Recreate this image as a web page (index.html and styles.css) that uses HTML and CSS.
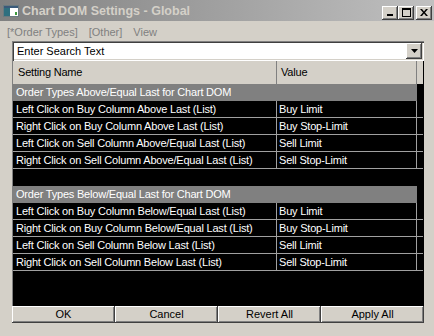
FILE: index.html
```html
<!DOCTYPE html>
<html lang="en">

<head>
    <meta charset="UTF-8" />
    <title>Chart DOM Settings - Global</title>
    <link rel="stylesheet" href="styles.css">
</head>

<body>
    <!-- Title bar -->
    <div class="titlebar">
        <svg class="app-icon" width="16" height="12" viewBox="0 0 16 12">
            <rect x="0.5" y="0.5" width="15" height="11" fill="#c0c0c0" stroke="#6a7a80" />
            <rect x="1" y="1" width="14" height="2" fill="#3a5a7a" />
            <rect x="1" y="3" width="6" height="8" fill="#2f6f7f" />
            <rect x="7" y="3" width="8" height="8" fill="#ffffff" />
            <rect x="12" y="7" width="2" height="3" fill="#3c9a3c" />
        </svg>
        <span class="title">Chart DOM Settings - Global</span>
        <div class="caption-buttons">
            <div class="cap-btn">
                <svg width="8" height="7" viewBox="0 0 8 7"><rect x="1" y="5" width="6" height="2" fill="#000" /></svg>
            </div>
            <div class="cap-btn">
                <svg width="9" height="9" viewBox="0 0 9 9"><rect x="0.5" y="0.5" width="8" height="8" fill="none" stroke="#000" /><rect x="0" y="0" width="9" height="2" fill="#000" /></svg>
            </div>
            <div class="cap-btn close">
                <svg width="8" height="7" viewBox="0 0 8 7"><path d="M0 0h2l2 2.5L6 0h2L5 3.5 8 7H6L4 4.5 2 7H0l3-3.5z" fill="#000" /></svg>
            </div>
        </div>
    </div>

    <!-- Menu -->
    <div class="menu">
        <span>[*Order Types]</span>
        <span>[Other]</span>
        <span>View</span>
    </div>

    <div class="content">
        <!-- Search box -->
        <div class="combo">
            <div class="combo-text">Enter Search Text</div>
            <div class="combo-btn">
                <svg width="7" height="4" viewBox="0 0 7 4"><path d="M0 0h7L3.5 4z" fill="#000" /></svg>
            </div>
        </div>

        <!-- Settings grid -->
        <div class="grid">
            <div class="grid-head">
                <div class="h-name">Setting Name</div>
                <div class="h-value">Value</div>
                <div class="h-fill"></div>
            </div>

            <div class="row cat">
                <div class="cat-cell">Order Types Above/Equal Last for Chart DOM</div>
                <div class="fill"></div>
            </div>
            <div class="row data">
                <div class="c-name">Left Click on Buy Column Above Last (List)</div>
                <div class="c-value">Buy Limit</div>
                <div class="fill"></div>
            </div>
            <div class="row data">
                <div class="c-name">Right Click on Buy Column Above Last (List)</div>
                <div class="c-value">Buy Stop-Limit</div>
                <div class="fill"></div>
            </div>
            <div class="row data">
                <div class="c-name">Left Click on Sell Column Above/Equal Last (List)</div>
                <div class="c-value">Sell Limit</div>
                <div class="fill"></div>
            </div>
            <div class="row data">
                <div class="c-name">Right Click on Sell Column Above/Equal Last (List)</div>
                <div class="c-value">Sell Stop-Limit</div>
                <div class="fill"></div>
            </div>

            <div class="row blank"></div>

            <div class="row cat">
                <div class="cat-cell">Order Types Below/Equal Last for Chart DOM</div>
                <div class="fill"></div>
            </div>
            <div class="row data">
                <div class="c-name">Left Click on Buy Column Below/Equal Last (List)</div>
                <div class="c-value">Buy Limit</div>
                <div class="fill"></div>
            </div>
            <div class="row data">
                <div class="c-name">Right Click on Buy Column Below/Equal Last (List)</div>
                <div class="c-value">Buy Stop-Limit</div>
                <div class="fill"></div>
            </div>
            <div class="row data">
                <div class="c-name">Left Click on Sell Column Below Last (List)</div>
                <div class="c-value">Sell Limit</div>
                <div class="fill"></div>
            </div>
            <div class="row data">
                <div class="c-name">Right Click on Sell Column Below Last (List)</div>
                <div class="c-value">Sell Stop-Limit</div>
                <div class="fill"></div>
            </div>
        </div>

        <!-- Buttons -->
        <div class="buttons">
            <div class="btn">OK</div>
            <div class="btn">Cancel</div>
            <div class="btn">Revert All</div>
            <div class="btn">Apply All</div>
        </div>
    </div>
</body>

</html>
```

FILE: styles.css
```css
* {
    box-sizing: border-box;
}

body {
    font-family: "Liberation Sans", Arial, sans-serif;
    font-size: 11px;
    margin: 0;
    width: 434px;
    height: 336px;
    overflow: hidden;
    background-color: #d4d0c8;
}

.titlebar {
    display: flex;
    align-items: center;
    height: 21px;
    padding-left: 3px;
    background: linear-gradient(to right, #808080, #c0c0c0);
}

.app-icon {
    margin-right: 3px;
}

.title {
    flex: 1;
    color: #d4d0c8;
    font-weight: bold;
    font-size: 12.5px;
}

.caption-buttons {
    display: flex;
    margin: 4px 2px 0 0;
}

.cap-btn {
    width: 16px;
    height: 14px;
    display: flex;
    align-items: center;
    justify-content: center;
    background: #d4d0c8;
    box-shadow: inset -1px -1px #404040, inset 1px 1px #ffffff, inset -2px -2px #808080;
}

.cap-btn.close {
    margin-left: 2px;
}

.menu {
    display: flex;
    align-items: center;
    gap: 11px;
    height: 20px;
    padding: 2px 0 0 7px;
    color: #808080;
}

.content {
    padding: 0 10px 0 12px;
}

.combo {
    display: flex;
    height: 20px;
    background: #ffffff;
    box-shadow: inset 1px 1px #808080, inset 2px 2px #404040, inset -1px -1px #ffffff, inset -2px -2px #d4d0c8;
}

.combo-text {
    flex: 1;
    padding-left: 5px;
    line-height: 20px;
    color: #000;
}

.combo-btn {
    width: 16px;
    height: 16px;
    margin: 2px;
    display: flex;
    align-items: center;
    justify-content: center;
    background: #d4d0c8;
    box-shadow: inset -1px -1px #404040, inset 1px 1px #ffffff, inset -2px -2px #808080;
}

.grid {
    height: 245px;
    background: #000;
    border-left: 1px solid #808080;
    border-right: 1px solid #000;
    color: #ffffff;
    letter-spacing: -0.2px;
}

.grid-head {
    display: flex;
    height: 23px;
    background: #d4d0c8;
    color: #000;
    line-height: 22px;
}

.h-name {
    width: 264px;
    padding-left: 5px;
    border-right: 1px solid #808080;
}

.h-value {
    width: 140px;
    padding-left: 4px;
    border-right: 1px solid #808080;
}

.h-fill {
    flex: 1;
}

.row {
    display: flex;
    height: 17px;
    line-height: 16px;
    white-space: nowrap;
}

.cat-cell {
    width: 404px;
    padding-left: 3px;
    background: #808080;
    line-height: 17px;
}

.fill {
    flex: 1;
}

.data > div {
    border-bottom: 1px solid #a0a0a0;
    overflow: hidden;
}

.c-name {
    width: 264px;
    padding-left: 3px;
    border-right: 1px solid #a0a0a0;
}

.c-value {
    width: 140px;
    padding-left: 2px;
    border-right: 1px solid #a0a0a0;
}

.buttons {
    display: flex;
    height: 17px;
}

.btn {
    flex: 1;
    text-align: center;
    line-height: 17px;
    color: #000;
    background: #d4d0c8;
    box-shadow: inset -1px -1px #404040, inset 1px 1px #ffffff, inset -2px -2px #808080;
}
```
